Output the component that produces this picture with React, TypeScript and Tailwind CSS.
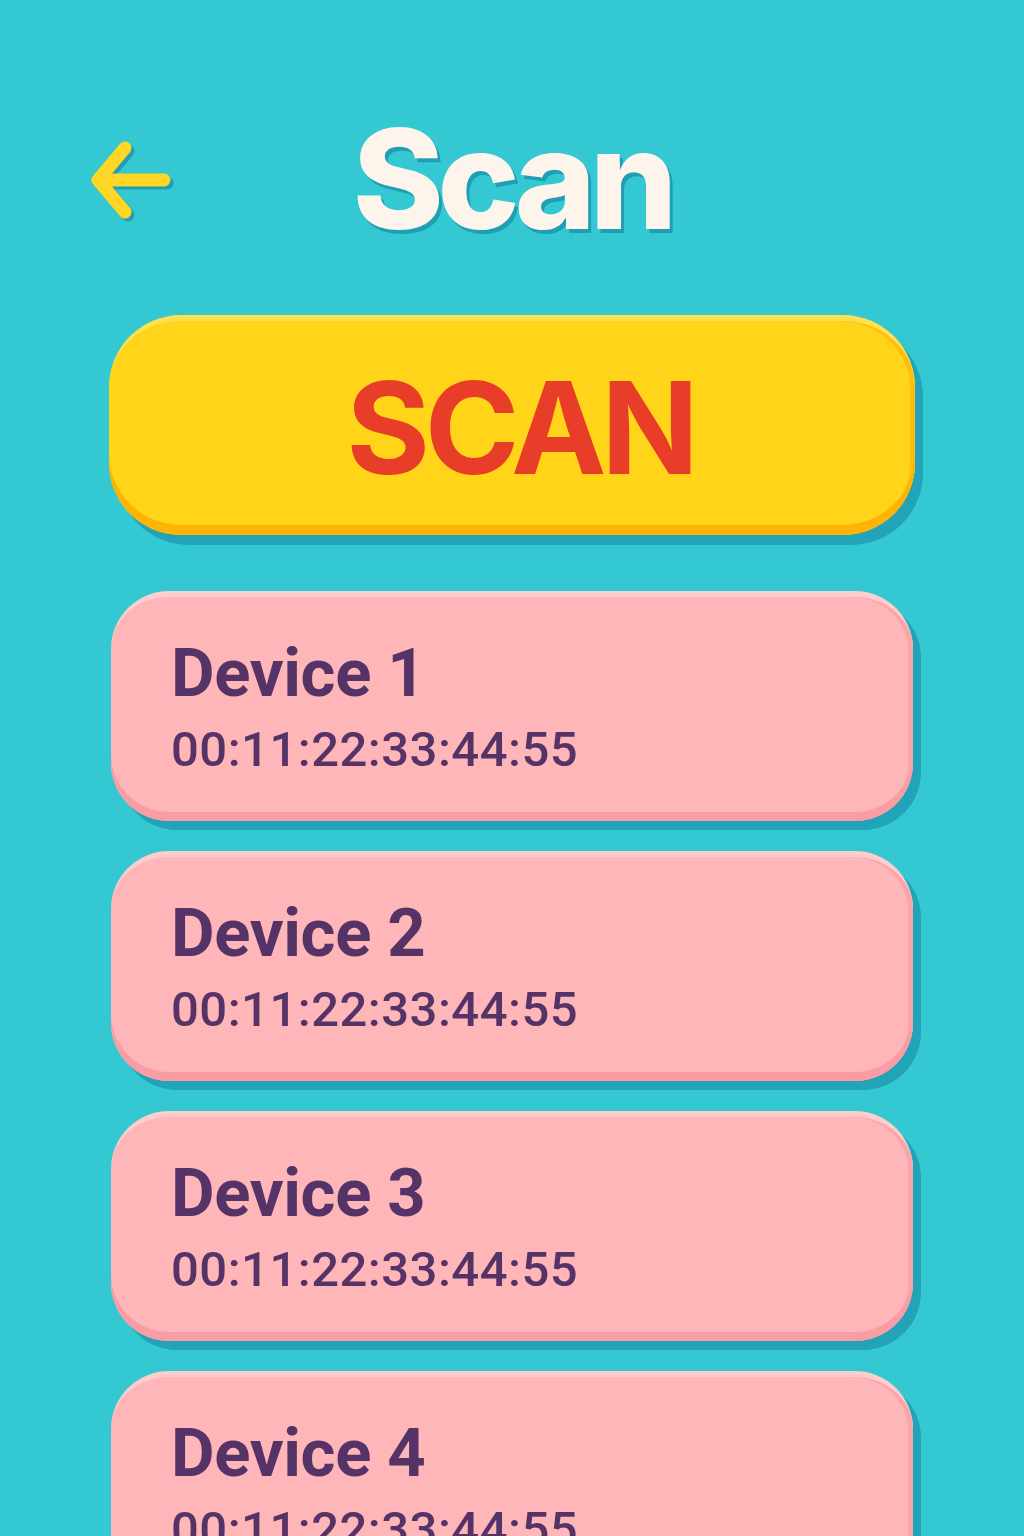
import React from "react";

const devices = [
  { name: "Device 1", mac: "00:11:22:33:44:55" },
  { name: "Device 2", mac: "00:11:22:33:44:55" },
  { name: "Device 3", mac: "00:11:22:33:44:55" },
  { name: "Device 4", mac: "00:11:22:33:44:55" },
];

function BackArrow() {
  return (
    <svg width="84" height="84" viewBox="0 0 84 84" fill="none">
      <g transform="translate(3 3)" stroke="#1f9fb4" strokeWidth="13" strokeLinecap="round" strokeLinejoin="round">
        <path d="M74 40H10" />
        <path d="M35 8L8 40l27 32" />
      </g>
      <g stroke="#ffd526" strokeWidth="13" strokeLinecap="round" strokeLinejoin="round">
        <path d="M74 40H10" />
        <path d="M35 8L8 40l27 32" />
      </g>
    </svg>
  );
}

function DeviceCard({ name, mac }: { name: string; mac: string }) {
  return (
    <div className="w-[802px] h-[230px] mx-auto rounded-[58px] bg-[#ffb6b9] border-t-[6px] border-[#ffcdcb] shadow-[inset_0_-9px_0_#f99ca3,inset_-5px_0_0_#f9a6ab,8px_9px_0_#22a3b8] px-[60px] pt-[43px] font-['Roboto',sans-serif] text-[#553366]">
      <div className="text-[67px] font-bold leading-none tracking-[-0.005em]">{name}</div>
      <div className="mt-[18px] text-[49px] font-medium leading-none tracking-[0.01em]">{mac}</div>
    </div>
  );
}

export default function App() {
  return (
    <div className="h-[1536px] w-full overflow-hidden bg-[#34c8d3]">
      <div className="grid grid-cols-[1fr_auto_1fr] items-center pt-[110px] px-[90px]">
        <div className="mt-[6px]">
          <BackArrow />
        </div>
        <h1 className="font-['Inter',sans-serif] font-extrabold text-[138px] leading-none tracking-[-0.045em] text-[#fdf5ec] [text-shadow:3px_4px_0_#1f9fb4]">
          Scan
        </h1>
        <div />
      </div>

      <div className="mt-[67px] w-[806px] mx-auto">
        <button className="w-full h-[220px] rounded-[72px] bg-[#ffd419] border-t-[6px] border-[#ffe14f] shadow-[inset_0_-10px_0_#ffb405,inset_-5px_0_0_#ffbd12,8px_10px_0_#22a3b8] flex items-center justify-center pl-[16px]">
          <span className="font-['Inter',sans-serif] font-bold text-[128px] leading-none tracking-[-0.04em] text-[#e83d28]">
            SCAN
          </span>
        </button>
      </div>

      <div className="mt-[56px] flex flex-col gap-[30px]">
        {devices.map((d) => (
          <DeviceCard key={d.name} name={d.name} mac={d.mac} />
        ))}
      </div>
    </div>
  );
}
